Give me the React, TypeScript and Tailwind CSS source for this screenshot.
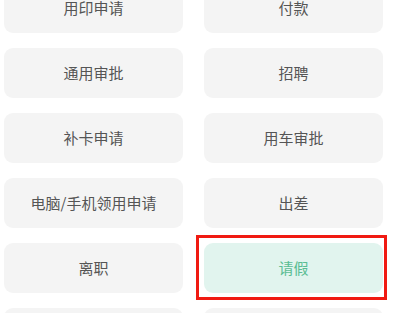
import React from 'react'

// 审批类型列表
const ITEMS = [
  '用印申请', '付款',
  '通用审批', '招聘',
  '补卡申请', '用车审批',
  '电脑/手机领用申请', '出差',
  '离职', '请假',
  '转正', '加班',
]

const ACTIVE = '请假'

const App: React.FC = () => {
  return (
    <div
      className="h-[313px] w-[393px] overflow-hidden bg-white"
      style={{ fontFamily: '"Noto Sans CJK SC", "Noto Sans", sans-serif' }}
    >
      <div className="mt-[-17px] grid grid-cols-[179px_179px] gap-x-[21px] gap-y-[15px] pl-[4px]">
        {ITEMS.map(item => {
          const active = item === ACTIVE
          return (
            <div key={item} className="relative">
              <button
                className={`flex h-[50px] w-full items-center justify-center rounded-[9px] text-[15px] ${
                  active ? 'bg-[#e1f4ee] text-[#5bbd93]' : 'bg-[#f4f4f4] text-[#555555]'
                }`}
              >
                {item}
              </button>
              {active && (
                <div className="pointer-events-none absolute -left-[8px] -right-[4px] -top-[8px] -bottom-[7px] border-[3px] border-[#f01a12]" />
              )}
            </div>
          )
        })}
      </div>
    </div>
  )
}

export default App
